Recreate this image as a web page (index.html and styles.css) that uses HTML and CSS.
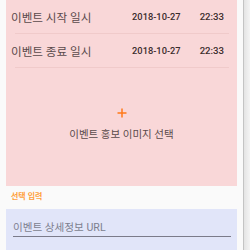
FILE: index.html
```html
<!DOCTYPE html>
<html lang="ko">
<head>
    <meta charset="UTF-8">
    <meta name="viewport" content="width=device-width, initial-scale=1.0">
    <title>이벤트 등록</title>
    <link rel="stylesheet" href="styles.css">
</head>
<body>
    <div class="page">
        <div class="content">
            <div class="event-box">
                <div class="row">
                    <span class="row-label">이벤트 시작 일시</span>
                    <span class="date">2018-10-27</span>
                    <span class="time">22:33</span>
                </div>
                <div class="divider"></div>
                <div class="row">
                    <span class="row-label">이벤트 종료 일시</span>
                    <span class="date">2018-10-27</span>
                    <span class="time">22:33</span>
                </div>
                <div class="divider"></div>
                <div class="image-pick">
                    <svg class="plus" width="10" height="10" viewBox="0 0 10 10">
                        <path d="M5 0.5V9.5M0.5 5H9.5" stroke="#ff7a1a" stroke-width="1.5" fill="none"/>
                    </svg>
                    <span class="image-text">이벤트 홍보 이미지 선택</span>
                </div>
            </div>
            <div class="section-label">선택 입력</div>
            <div class="input-box">
                <div class="url-input">이벤트 상세정보 URL</div>
            </div>
        </div>
        <div class="edge"></div>
    </div>
</body>
</html>
```

FILE: styles.css
```css
body {
    margin: 0;
    padding: 0;
    height: 250px;
    background: #fafafa;
    font-family: Roboto, "Noto Sans CJK KR", sans-serif;
    overflow: hidden;
}
.page {
    display: flex;
    width: 250px;
    height: 250px;
    overflow: hidden;
}
.content {
    width: 231px;
    padding: 0 6px;
}
.edge {
    width: 6px;
    border-left: 1px solid #c4c4c4;
    background: linear-gradient(90deg, #e4e4e4, #f4f4f4);
}
.event-box {
    background: #f9d7d8;
}
.row {
    display: flex;
    align-items: center;
    height: 33px;
    padding: 0 13px 0 5px;
}
.row-label {
    font-size: 11.6px;
    color: #5a4a4b;
}
.date {
    margin-left: auto;
    color: #3b2c2d;
    font-weight: 500;
    font-size: 9.3px;
}
.time {
    margin-left: 19px;
    color: #3b2c2d;
    font-weight: 500;
    font-size: 9.6px;
}
.divider {
    height: 1px;
    margin: 0 8px 0 9px;
    background: #f0caca;
}
.image-pick {
    display: flex;
    flex-direction: column;
    align-items: center;
    height: 78px;
    padding-top: 40px;
    gap: 10px;
}
.image-text {
    font-size: 10.5px;
    line-height: 14px;
    color: #5a4a4b;
}
.section-label {
    padding: 5px 5px 0;
    height: 12px;
    line-height: 12px;
    margin-bottom: 6px;
    font-size: 8px;
    font-weight: bold;
    color: #ffa13d;
}
.input-box {
    background: #e1e5f9;
    height: 50px;
    padding: 11px 6px 0 7px;
}
.url-input {
    font-size: 10.6px;
    line-height: 15px;
    padding-bottom: 1px;
    color: #7d7f8f;
    border-bottom: 1px solid #7b7b8a;
}
```
